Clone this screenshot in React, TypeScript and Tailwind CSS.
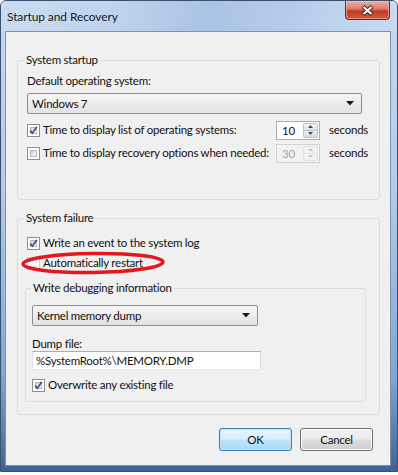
import React from "react";

function CheckBox({ checked = false, faint = false }: { checked?: boolean; faint?: boolean }) {
  return (
    <span
      className={`relative block h-[13px] w-[13px] shrink-0 border bg-white p-[2px] ${
        faint ? "border-[#c9c9c9]" : "border-[#8e8f8f]"
      }`}
    >
      <span
        className={`block h-full w-full border ${
          faint
            ? "border-[#e4e4e4] bg-[#f7f7f7]"
            : "border-[#b4b9be] bg-[linear-gradient(135deg,#cbcfd5_0%,#e6e8eb_50%,#f7f7f7_100%)]"
        }`}
      />
      {checked && (
        <svg className="absolute inset-0" width="11" height="11" viewBox="0 0 11 11">
          <path d="M2.2 5.6 L4.4 8.2 L8.9 1.8" fill="none" stroke="#3c4f8c" strokeWidth="1.7" />
        </svg>
      )}
    </span>
  );
}

function Combo({ value, width }: { value: string; width: string }) {
  return (
    <div
      className={`flex h-[21px] ${width} items-center justify-between rounded-[2px] border border-[#8e8f8f] bg-[linear-gradient(180deg,#f6f6f6_0%,#ececec_50%,#e2e2e2_100%)] pl-[4px] pr-[7px]`}
    >
      <span className="leading-[16px]">{value}</span>
      <svg width="8" height="5" viewBox="0 0 8 5">
        <path d="M0 0 H8 L4 4.5 Z" fill="#1a1a1a" />
      </svg>
    </div>
  );
}

function Spin({ value, disabled = false }: { value: string; disabled?: boolean }) {
  const arrow = disabled ? "#c4c4c4" : "#4a4a4a";
  return (
    <div
      className={`flex h-[19px] w-[44px] border ${
        disabled ? "border-[#d2d3d6] bg-[#f2f2f2] text-[#a3a3a3]" : "border-[#abadb3] bg-white"
      }`}
    >
      <div className="flex-1 pl-[5px] leading-[17px]">{value}</div>
      <div className="flex w-[16px] flex-col py-[1px] pr-[1px]">
        <div
          className={`flex flex-1 items-center justify-center rounded-t-[2px] border ${
            disabled ? "border-[#e0e0e0] bg-[#f2f2f2]" : "border-[#b8c2cc] bg-[linear-gradient(180deg,#f4f6f8,#dde3ea)]"
          }`}
        >
          <svg width="5" height="3" viewBox="0 0 5 3">
            <path d="M0 3 L2.5 0 L5 3 Z" fill={arrow} />
          </svg>
        </div>
        <div
          className={`flex flex-1 items-center justify-center rounded-b-[2px] border border-t-0 ${
            disabled ? "border-[#e0e0e0] bg-[#f2f2f2]" : "border-[#b8c2cc] bg-[linear-gradient(180deg,#eef1f4,#d6dde5)]"
          }`}
        >
          <svg width="5" height="3" viewBox="0 0 5 3">
            <path d="M0 0 L5 0 L2.5 3 Z" fill={arrow} />
          </svg>
        </div>
      </div>
    </div>
  );
}

function Button({ label, primary = false }: { label: string; primary?: boolean }) {
  return (
    <button
      className={`h-[23px] w-[73px] rounded-[3px] border text-center leading-[21px] ${
        primary
          ? "border-[#3c7fb1] bg-[linear-gradient(180deg,#e8f5fc_0%,#d9effa_48%,#bee6fd_52%,#a7d9f5_100%)] shadow-[inset_0_0_0_1px_#bfe6fb]"
          : "border-[#707070] bg-[linear-gradient(180deg,#f2f2f2_0%,#ebebeb_48%,#dddddd_52%,#cfcfcf_100%)] shadow-[inset_0_0_0_1px_#fbfbfb]"
      }`}
    >
      {label}
    </button>
  );
}

export default function App() {
  return (
    <div className="h-[475px] w-[398px] overflow-hidden whitespace-nowrap bg-white font-['Lato',sans-serif] text-[11.5px] tracking-[-0.25px] text-[#111]">
      <div className="flex h-[472px] w-[398px] flex-col overflow-hidden rounded-t-[6px] border border-[#3a506e] bg-[linear-gradient(180deg,#c6d9ef_0%,#b3cce9_40%,#7fa6d6_80%,#3d6498_100%)]">
        {/* Title bar */}
        <div className="flex h-[30px] shrink-0 items-start justify-between bg-[linear-gradient(100deg,#cadcf1_0%,#bed3ec_30%,#a9c4e4_52%,#b7cdea_75%,#c9dbf0_100%)]">
          <span className="pl-[6px] pt-[7px] text-[12px] leading-[17px] tracking-[-0.1px] text-[#1a1a1a]">Startup and Recovery</span>
          <div className="mr-[7px] flex h-[19px] w-[45px] items-center justify-center rounded-b-[4px] border border-t-0 border-[#6b2a22] bg-[linear-gradient(180deg,#eab0a3_0%,#dc7b68_45%,#c23a22_55%,#cf5a40_100%)] shadow-[inset_0_0_0_1px_rgba(255,200,190,0.5)]">
            <svg width="13" height="11" viewBox="0 0 13 11">
              <path d="M2 1.5 L11 9.5 M11 1.5 L2 9.5" stroke="#4a1c14" strokeWidth="4" />
              <path d="M2.5 2 L10.5 9 M10.5 2 L2.5 9" stroke="#ffffff" strokeWidth="2.2" />
            </svg>
          </div>
        </div>

        {/* Client area */}
        <div className="flex flex-1 flex-col pb-[5px] pl-[4px] pr-[6px]">
          <div className="flex flex-1 flex-col border border-[#7f93ad] bg-[#f0f0f0] pt-[20px]">
            {/* System startup */}
            <fieldset className="ml-[11px] mr-[10px] rounded-[3px] border border-[#d5dfe5] px-[9px] pb-[36px]">
              <legend className="ml-[-3px] px-[2px] leading-[16px]">System startup</legend>
              <div className="mt-[5px] leading-[16px]">Default operating system:</div>
              <div className="mt-[4px]">
                <Combo value="Windows 7" width="w-[335px]" />
              </div>
              <div className="mt-[6px] flex h-[20px] items-center">
                <div className="flex w-[249px] items-center gap-[3px]">
                  <CheckBox checked />
                  <span>Time to display list of operating systems:</span>
                </div>
                <Spin value="10" />
                <span className="ml-[9px]">seconds</span>
              </div>
              <div className="mt-[3px] flex h-[20px] items-center">
                <div className="flex w-[249px] items-center gap-[3px]">
                  <CheckBox />
                  <span>Time to display recovery options when needed:</span>
                </div>
                <Spin value="30" disabled />
                <span className="ml-[9px]">seconds</span>
              </div>
            </fieldset>

            {/* System failure */}
            <fieldset className="ml-[11px] mr-[10px] mt-[10px] rounded-[3px] border border-[#d5dfe5] pb-[12px]">
              <legend className="ml-[6px] px-[2px] leading-[16px]">System failure</legend>
              <div className="mt-[7px] flex h-[20px] items-center gap-[3px] px-[9px]">
                <CheckBox checked />
                <span>Write an event to the system log</span>
              </div>
              <div className="relative flex h-[20px] items-center gap-[3px] px-[9px]">
                <CheckBox faint />
                <span>Automatically restart</span>
                <svg
                  className="pointer-events-none absolute left-[1px] top-[-4px]"
                  width="150"
                  height="28"
                  viewBox="0 0 150 28"
                >
                  <ellipse
                    cx="74"
                    cy="14"
                    rx="70"
                    ry="9.5"
                    fill="none"
                    stroke="#e3171d"
                    strokeWidth="3.5"
                    transform="rotate(-0.8 74 14)"
                  />
                </svg>
              </div>

              {/* Write debugging information */}
              <fieldset className="ml-[7px] mr-[13px] mt-[7px] rounded-[3px] border border-[#d5dfe5] px-[6px] pb-[6px]">
                <legend className="ml-[-1px] px-[2px] leading-[16px]">Write debugging information</legend>
                <div className="mt-[9px]">
                  <Combo value="Kernel memory dump" width="w-[226px]" />
                </div>
                <div className="mt-[11px] leading-[14px]">Dump file:</div>
                <div className="flex h-[19px] w-[229px] items-center border border-[#abadb3] border-l-[#e2e3ea] border-r-[#dbdfe6] border-b-[#e3e9ef] bg-white pl-[3px]">
                  %SystemRoot%\MEMORY.DMP
                </div>
                <div className="mt-[5px] flex h-[20px] items-center gap-[3px]">
                  <CheckBox checked />
                  <span>Overwrite any existing file</span>
                </div>
              </fieldset>
            </fieldset>

            {/* Buttons */}
            <div className="mr-[17px] mt-[13px] flex justify-end gap-[8px]">
              <Button label="OK" primary />
              <Button label="Cancel" />
            </div>
          </div>
        </div>
      </div>
    </div>
  );
}
